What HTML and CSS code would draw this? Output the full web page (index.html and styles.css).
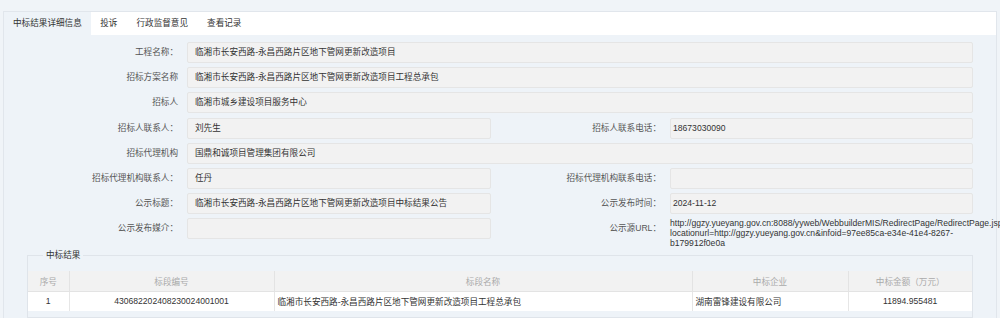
FILE: index.html
```html
<!DOCTYPE html>
<html lang="zh-CN">
<head>
<meta charset="utf-8">
<title>中标结果详细信息</title>
<meta name="viewport" content="width=device-width, initial-scale=1">
<link rel="stylesheet" href="styles.css">
</head>
<body>
	<div class="panel">
		<div class="tabs">
			<span class="tab active">中标结果详细信息</span>
			<span class="tab">投诉</span>
			<span class="tab">行政监督意见</span>
			<span class="tab">查看记录</span>
		</div>

		<div class="form">
			<div class="label">工程名称：</div>
			<div class="value wide">临湘市长安西路-永昌西路片区地下管网更新改造项目</div>

			<div class="label">招标方案名称</div>
			<div class="value wide">临湘市长安西路-永昌西路片区地下管网更新改造项目工程总承包</div>

			<div class="label">招标人</div>
			<div class="value wide">临湘市城乡建设项目服务中心</div>

			<div class="label">招标人联系人：</div>
			<div class="value">刘先生</div>
			<div class="label">招标人联系电话：</div>
			<div class="value right">18673030090</div>

			<div class="label">招标代理机构</div>
			<div class="value wide">国鼎和诚项目管理集团有限公司</div>

			<div class="label">招标代理机构联系人：</div>
			<div class="value">任丹</div>
			<div class="label">招标代理机构联系电话：</div>
			<div class="value right"></div>

			<div class="label">公示标题：</div>
			<div class="value">临湘市长安西路-永昌西路片区地下管网更新改造项目中标结果公告</div>
			<div class="label">公示发布时间：</div>
			<div class="value right">2024-11-12</div>

			<div class="label">公示发布媒介：</div>
			<div class="value"></div>
			<div class="label">公示源URL：</div>
			<div class="url">http://ggzy.yueyang.gov.cn:8088/yyweb/WebbuilderMIS/RedirectPage/RedirectPage.jsp?<br>locationurl=http://ggzy.yueyang.gov.cn&amp;infoid=97ee85ca-e34e-41e4-8267-<br>b179912f0e0a</div>
		</div>

		<fieldset class="result">
			<legend>中标结果</legend>
			<table>
				<tr>
					<th class="c1">序号</th>
					<th class="c2">标段编号</th>
					<th class="c3">标段名称</th>
					<th class="c4">中标企业</th>
					<th class="c5">中标金额（万元）</th>
				</tr>
				<tr>
					<td class="center">1</td>
					<td class="center">430682202408230024001001</td>
					<td>临湘市长安西路-永昌西路片区地下管网更新改造项目工程总承包</td>
					<td>湖南雷锋建设有限公司</td>
					<td class="center">11894.955481</td>
				</tr>
			</table>
		</fieldset>
	</div>
</body>
</html>
```

FILE: styles.css
```css
*{ margin:0; padding:0; box-sizing:border-box; }
body{ background:#f0f4f8; font-family:"Liberation Sans","Noto Sans CJK SC",sans-serif; font-size:8.6px; color:#333; }

.panel{ margin:11px 0 0 3px; width:994px; height:320px; background:#eef3f8; border:1px solid #e1e6ec; border-bottom:none; }

.tabs{ display:flex; height:23px; background:#fff; }
.tabs .tab{ padding:0 9.5px; line-height:23px; color:#333; }
.tabs .tab.active{ background:#eef3f8; padding:0 9px; }

.form{ display:grid; grid-template-columns:177px 304px 179px 303px; row-gap:4.2px; padding:7px 0 0 6px; align-items:start; }
.form .label{ text-align:right; padding-right:9px; line-height:21px; color:#555; }
.form .value{ height:21px; line-height:19px; padding-left:7px; background:#f2f2f2; border:1px solid #e5e5e5; border-radius:2px; white-space:nowrap; overflow:hidden; }
.form .value.wide{ grid-column:span 3; }
.form .value.right{ padding-left:2px; }
.form .url{ line-height:10px; white-space:nowrap; color:#333; }

.result{ margin:1px 0 0 23px; width:946px; border:1px solid #dfe4ea; padding:0 0 6px 0; }
.result legend{ margin-left:15px; padding:0 3px; line-height:12px; color:#333; }

.result table{ width:100%; margin-top:10px; border-collapse:collapse; table-layout:fixed; }
.result th{ height:20px; background:#f2f2f2; color:#aaa; font-weight:normal; border:1px solid #e3e3e3; border-top:none; }
.result td{ height:19.5px; background:#fff; padding-left:3px; border:1px solid #e6e6e6; border-bottom:none; }
.result td.center{ text-align:center; padding-left:0; }
.result tr > :first-child{ border-left:none; }
.result tr > :last-child{ border-right:none; }
.result .c1{ width:41px; }
.result .c2{ width:205px; }
.result .c3{ width:418px; }
.result .c4{ width:156px; }
.result .c5{ width:124px; }
```
